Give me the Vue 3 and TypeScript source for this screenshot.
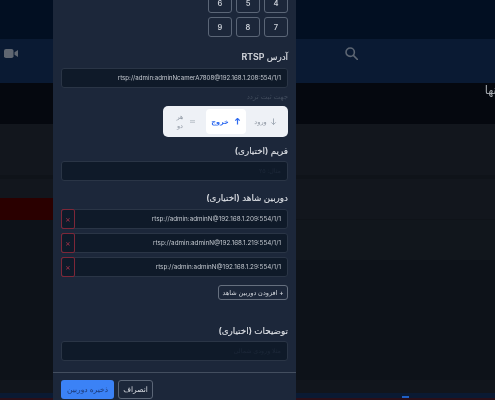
<script setup lang="ts">
const keyRows: string[][] = [['4', '5', '6'], ['7', '8', '9']]
const witnesses: string[] = [
  'rtsp://admin:adminN@192.168.1.209:554/1/1',
  'rtsp://admin:adminN@192.168.1.219:554/1/1',
  'rtsp://admin:adminN@192.168.1.29:554/1/1'
]
</script>

<template>
  <div class="page">
    <div class="band-top"></div>
    <header class="nav">
      <svg class="cam" viewBox="0 0 14 10" width="14" height="9" preserveAspectRatio="none">
        <rect x="0" y="0" width="9.5" height="10" rx="2" fill="#5f6671" />
        <path d="M10.5 3.6 14 1.2v7.6l-3.5-2.4z" fill="#5f6671" />
      </svg>
      <svg class="search" viewBox="0 0 14 14" width="13" height="13" fill="none" stroke="#5d6673" stroke-width="1.7">
        <circle cx="5.6" cy="5.6" r="4.5" />
        <path d="M9 9l4.4 4.4" stroke-linecap="round" />
      </svg>
    </header>
    <div class="title-bar"><span class="title">دوربینها</span></div>
    <div class="table">
      <div class="row r1"></div>
      <div class="row r2"></div>
      <div class="row r3"><div class="alarm"></div></div>
      <div class="row r4"></div>
      <div class="spacer"></div>
      <div class="row r5"></div>
    </div>
    <footer class="bottom"><i class="mark"></i></footer>

    <section class="modal" dir="rtl">
      <div class="body">
        <div class="keys">
          <div v-for="(row, i) in keyRows" :key="i" class="key-row">
            <button v-for="k in row" :key="k" class="key">{{ k }}</button>
          </div>
        </div>

        <label class="label rtsp-label">آدرس RTSP</label>
        <div class="input ltr main-url">rtsp://admin:adminNcamerA7808@192.168.1.208:554/1/1</div>
        <div class="hint">جهت ثبت تردد</div>

        <div class="segment">
          <div class="seg seg-in">
            <svg viewBox="0 0 8 8" width="7" height="7" fill="none" stroke="#9aa3b0" stroke-width="1"><path d="M4 .5v7M1.5 5 4 7.5 6.5 5" /></svg>
            <span>ورود</span>
          </div>
          <div class="seg seg-out">
            <svg viewBox="0 0 8 8" width="7" height="7" fill="none" stroke="#2f6bf0" stroke-width="1.4"><path d="M4 7.5v-7M1.5 3 4 .5 6.5 3" /></svg>
            <span>خروج</span>
          </div>
          <div class="seg seg-both">
            <svg viewBox="0 0 8 6" width="7" height="5" fill="none" stroke="#a6adb8" stroke-width=".8"><path d="M1 2h6M7 4H1" /></svg>
            <span>هر<br />دو</span>
          </div>
        </div>

        <label class="label frame-label">فریم (اختیاری)</label>
        <div class="input ph">مثال: ۲۵</div>

        <label class="label witness-label">دوربین شاهد (اختیاری)</label>
        <div class="witnesses">
          <div v-for="w in witnesses" :key="w" class="input ltr witness">
            <span class="url">{{ w }}</span>
            <span class="remove">×</span>
          </div>
        </div>
        <button class="add">+ افزودن دوربین شاهد</button>

        <label class="label notes-label">توضیحات (اختیاری)</label>
        <div class="input ph">مثلا ورودی شمالی</div>
      </div>
      <div class="foot">
        <button class="cancel">انصراف</button>
        <button class="save">ذخیره دوربین</button>
      </div>
    </section>
  </div>
</template>

<style scoped>
.page {
  position: relative;
  width: 495px;
  height: 400px;
  overflow: hidden;
  background: #0d1219;
  font-family: Inter, "DejaVu Sans", sans-serif;
  display: flex;
  flex-direction: column;
  filter: blur(0.35px);
}
.band-top { height: 39px; background: #020f22; flex: none; }
.nav {
  height: 44px;
  flex: none;
  background: #0a1a33;
  position: relative;
  display: flex;
  align-items: flex-start;
}
.cam { margin: 10px 0 0 4px; }
.search { margin: 8px 0 0 327px; }
.title-bar {
  height: 41px;
  flex: none;
  background: #05080f;
  display: flex;
  justify-content: flex-start;
  direction: rtl;
  overflow: hidden;
}
.title {
  color: #a7abb1;
  font-size: 11.5px;
  white-space: nowrap;
  margin-right: -25px;
  line-height: 16px;
  margin-top: -1px;
}
.table { flex: 1; display: flex; flex-direction: column; }
.row { flex: none; background: #12171e; }
.r1 { height: 51px; background: #12161d; }
.r2 { height: 19px; border-top: 4px solid #0f1319; background: #12161d; }
.r3 { height: 21px; background: #12161d; display: flex; border-bottom: 1px solid #0f1319; }
.alarm { width: 53px; height: 29px; background: #2a0000; border-bottom: 4px solid #0f1a20; flex: none; }
.r4 { height: 40px; background: linear-gradient(to right, #0d1219 53px, #11161c 53px); }
.spacer { flex: 1; background: #0d1219; }
.r5 { height: 13px; background: #11151c; }
.bottom {
  height: 7px;
  flex: none;
  position: relative;
  background: #0a1a33;
  border-bottom: 2px solid #2b0f18;
  box-sizing: border-box;
}
.mark {
  position: absolute;
  left: 402px;
  top: 3px;
  width: 7px;
  height: 2px;
  background: #1f5fc4;
}

.modal {
  position: absolute;
  left: 53px;
  top: 0;
  width: 243px;
  height: 400px;
  background: #1c273a;
  overflow: hidden;
  display: flex;
  flex-direction: column;
  color: #d8dce2;
}
.body {
  padding: 0 8px;
  height: 372px;
  flex: none;
  overflow: hidden;
  box-sizing: border-box;
}
.keys {
  margin-top: -7px;
  display: flex;
  flex-direction: column;
  gap: 4px;
}
.key-row { display: flex; gap: 4px; }
.key {
  width: 24px;
  height: 20px;
  padding: 0;
  box-sizing: border-box;
  background: transparent;
  border: 1px solid #5b6677;
  border-radius: 3px;
  color: #c9ced6;
  font: 600 7.5px Inter, sans-serif;
}
.label {
  display: block;
  font-size: 8.8px;
  line-height: 14px;
  font-weight: 500;
  color: #dfe2e7;
  -webkit-text-stroke: 0.1px #dfe2e7;
}
.rtsp-label { margin-top: 13px; margin-bottom: 4px; }
.input {
  height: 20px;
  box-sizing: border-box;
  background: #0f1a29;
  border: 1px solid #2a3546;
  border-radius: 3px;
  font-size: 6.3px;
  line-height: 18px;
  color: #c3c8cf;
  padding: 0 6px;
}
.main-url { font-size: 6.15px; }
.ph { color: #1d2839; }
.ltr { text-align: right; }
.input.ltr { direction: ltr; }
.hint {
  font-size: 7px;
  line-height: 10px;
  color: #404b5c;
  margin-top: 4px;
}
.segment {
  margin-top: 4px;
  width: 125px;
  height: 31px;
  box-sizing: border-box;
  padding: 3px;
  background: #eef1f6;
  border-radius: 5px;
  display: flex;
  align-items: stretch;
}
.seg {
  display: flex;
  align-items: center;
  justify-content: center;
  gap: 3px;
  font-size: 6.5px;
  color: #8f97a3;
}
.seg-in { width: 39px; }
.seg-out {
  width: 40px;
  background: #fff;
  border-radius: 4px;
  color: #2f6bf0;
  font-weight: 600;
  gap: 5px;
}
.seg-both { flex: 1; gap: 5px; line-height: 9px; text-align: center; }
.frame-label { margin-top: 7px; margin-bottom: 3px; }
.witness-label { margin-top: 10px; margin-bottom: 4px; }
.witnesses { display: flex; flex-direction: column; gap: 4px; }
.witness { display: flex; flex-direction: row; align-items: stretch; padding: 0; justify-content: space-between; }
.witness .url { order: 2; padding-right: 6px; }
.remove {
  order: 1;
  width: 14px;
  margin: -1px 0 -1px -1px;
  box-sizing: border-box;
  border: 1px solid #7d2738;
  border-radius: 2px;
  color: #a8324a;
  text-align: center;
  line-height: 18px;
  font-size: 8px;
}
.add {
  display: block;
  margin-top: 8px;
  width: 70px;
  height: 15px;
  padding: 0;
  box-sizing: border-box;
  background: transparent;
  border: 1px solid #66707f;
  border-radius: 3px;
  color: #d3d7dd;
  font: 500 6.5px Inter, "DejaVu Sans", sans-serif;
  white-space: nowrap;
}
.notes-label { margin-top: 24px; margin-bottom: 3px; }
.foot {
  flex: 1;
  border-top: 1px solid #434e5f;
  display: flex;
  gap: 4px;
  padding: 7px 8px 0;
  justify-content: flex-end;
}
.foot button {
  height: 19px;
  padding: 0;
  border-radius: 3px;
  box-sizing: border-box;
  font: 500 7.5px Inter, "DejaVu Sans", sans-serif;
}
.cancel {
  width: 35px;
  background: transparent;
  border: 1px solid #5b6677;
  color: #d8dce2;
}
.save {
  width: 53px;
  background: #3b82f6;
  border: none;
  color: #1c3a78;
}
</style>
